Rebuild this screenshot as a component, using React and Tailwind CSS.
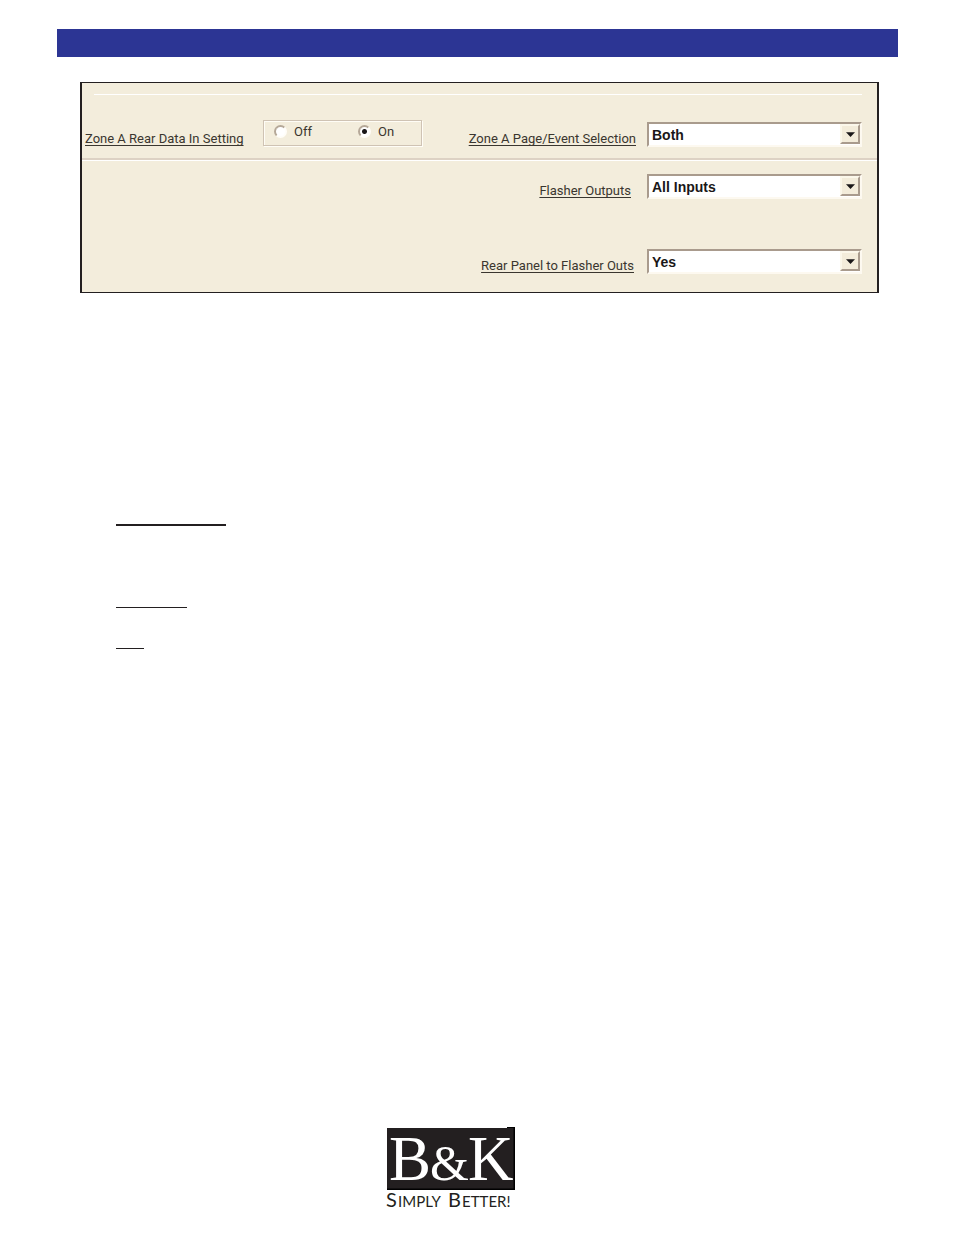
import React from "react";

const labelClass =
  "font-['Roboto',sans-serif] text-[13px] leading-4 text-[#3a362f] whitespace-nowrap underline decoration-1 underline-offset-2 [text-decoration-skip-ink:none]";

function SelectRow({ id, label, options, gap }) {
  return (
    <div className="ml-auto flex items-start">
      <label htmlFor={id} className={`${labelClass} ${gap} mt-[9px]`}>
        {label}
      </label>
      <div className="relative w-[215px]">
        <select
          id={id}
          defaultValue={options[0]}
          className="block h-[25px] w-full appearance-none border-2 border-t-[#a99b8d] border-l-[#a99b8d] border-r-[#fdf9f0] border-b-[#fdf9f0] bg-white pl-[3px] font-['Liberation_Sans',sans-serif] text-sm leading-5 font-bold text-[#1a1718] outline-none"
        >
          {options.map((o) => (
            <option key={o}>{o}</option>
          ))}
        </select>
        <span className="pointer-events-none absolute top-[2px] right-[2px] flex h-5 w-5 items-center justify-center border-2 border-t-[#fbf7ea] border-l-[#fbf7ea] border-r-[#a99b8d] border-b-[#a99b8d] bg-[#f3ecda]">
          <svg width="9" height="5" viewBox="0 0 9 5" aria-hidden="true">
            <path d="M0 0.3H9L4.5 5Z" fill="#1a1718" />
          </svg>
        </span>
      </div>
    </div>
  );
}

function Radio({ id, label, checked }) {
  return (
    <div className="flex w-[84px] shrink-0 items-center gap-[7px]">
      <input
        type="radio"
        id={id}
        name="rear-data"
        defaultChecked={checked}
        className="h-[13px] w-[13px] appearance-none rounded-full border-2 border-t-[#b5a898] border-l-[#b5a898] border-r-[#fffdf8] border-b-[#fffdf8] bg-white checked:bg-[radial-gradient(circle,#1a1718_2px,#ffffff_3px)]"
      />
      <label
        htmlFor={id}
        className="font-['Roboto',sans-serif] text-[13px] leading-4 text-[#3a362f]"
      >
        {label}
      </label>
    </div>
  );
}

function Logo() {
  return (
    <svg
      width="132"
      height="90"
      viewBox="-2 -4 132 90"
      role="img"
      aria-label="B&K Simply Better!"
    >
      <rect x="0" y="1" width="128" height="62" fill="#231f20" />
      <path d="M120 0H128V63H0V61.5H126.5V1H120Z" fill="#000000" />
      <g fill="#ffffff" fontFamily="'Liberation Serif', serif">
        <text x="2" y="53" fontSize="63">B</text>
        <text x="43" y="53" fontSize="50">&amp;</text>
        <text x="81" y="53" fontSize="63">K</text>
      </g>
      <g fill="#231f20" fontFamily="Lato, sans-serif">
        <text x="-1" y="80" fontSize="20">S</text>
        <text x="11" y="80" fontSize="15">IMPLY</text>
        <text x="61" y="80" fontSize="20">B</text>
        <text x="75" y="80" fontSize="15">ETTER!</text>
      </g>
    </svg>
  );
}

export default function App() {
  return (
    <div className="flex min-h-screen flex-col bg-white pt-[29px] pr-14 pb-[22px] pl-[57px]">
      <header className="h-7 bg-[#2c3594]" />

      <main className="mt-[25px]">
        <form className="mr-[19px] ml-[23px] border-x-2 border-y border-[#231f20] bg-[#f3eddc]">
          <hr className="mt-[11px] mr-[15px] ml-3 border-t border-white" />
          <div className="flex h-[63px] items-start pt-[27px] pr-[15px] pl-[3px]">
            <span id="rear-label" className={`${labelClass} mt-[9px] w-[178px]`}>
              Zone A Rear Data In Setting
            </span>
            <div
              role="radiogroup"
              aria-labelledby="rear-label"
              className="-mt-0.5 flex h-[26px] w-[159px] items-center border border-[#cfc3b4] pb-[3px] pl-[10px] shadow-[inset_1px_1px_0_#fffdf6,1px_1px_0_#fffdf6]"
            >
              <Radio id="off" label="Off" />
              <Radio id="on" label="On" checked />
            </div>
            <SelectRow
              id="page-event"
              label="Zone A Page/Event Selection"
              options={["Both", "Page", "Event"]}
              gap="mr-[11px]"
            />
          </div>
          <hr className="h-[3px] border-t-2 border-b border-t-[#ddd2c4] border-b-white" />
          <div className="flex flex-col gap-[50px] pt-[13px] pr-[15px] pb-[18px]">
            <SelectRow
              id="flasher"
              label="Flasher Outputs"
              options={["All Inputs", "None"]}
              gap="mr-4"
            />
            <SelectRow
              id="rear-panel"
              label="Rear Panel to Flasher Outs"
              options={["Yes", "No"]}
              gap="mr-[13px]"
            />
          </div>
        </form>

        <div className="mt-[231px] ml-[59px] flex flex-col">
          <hr className="w-[110px] border-t-2 border-[#231f20]" />
          <hr className="mt-[81px] w-[71px] border-t border-[#231f20]" />
          <hr className="mt-10 w-7 border-t border-[#231f20]" />
        </div>
      </main>

      <footer className="mt-auto flex justify-center pr-[54px]">
        <Logo />
      </footer>
    </div>
  );
}
